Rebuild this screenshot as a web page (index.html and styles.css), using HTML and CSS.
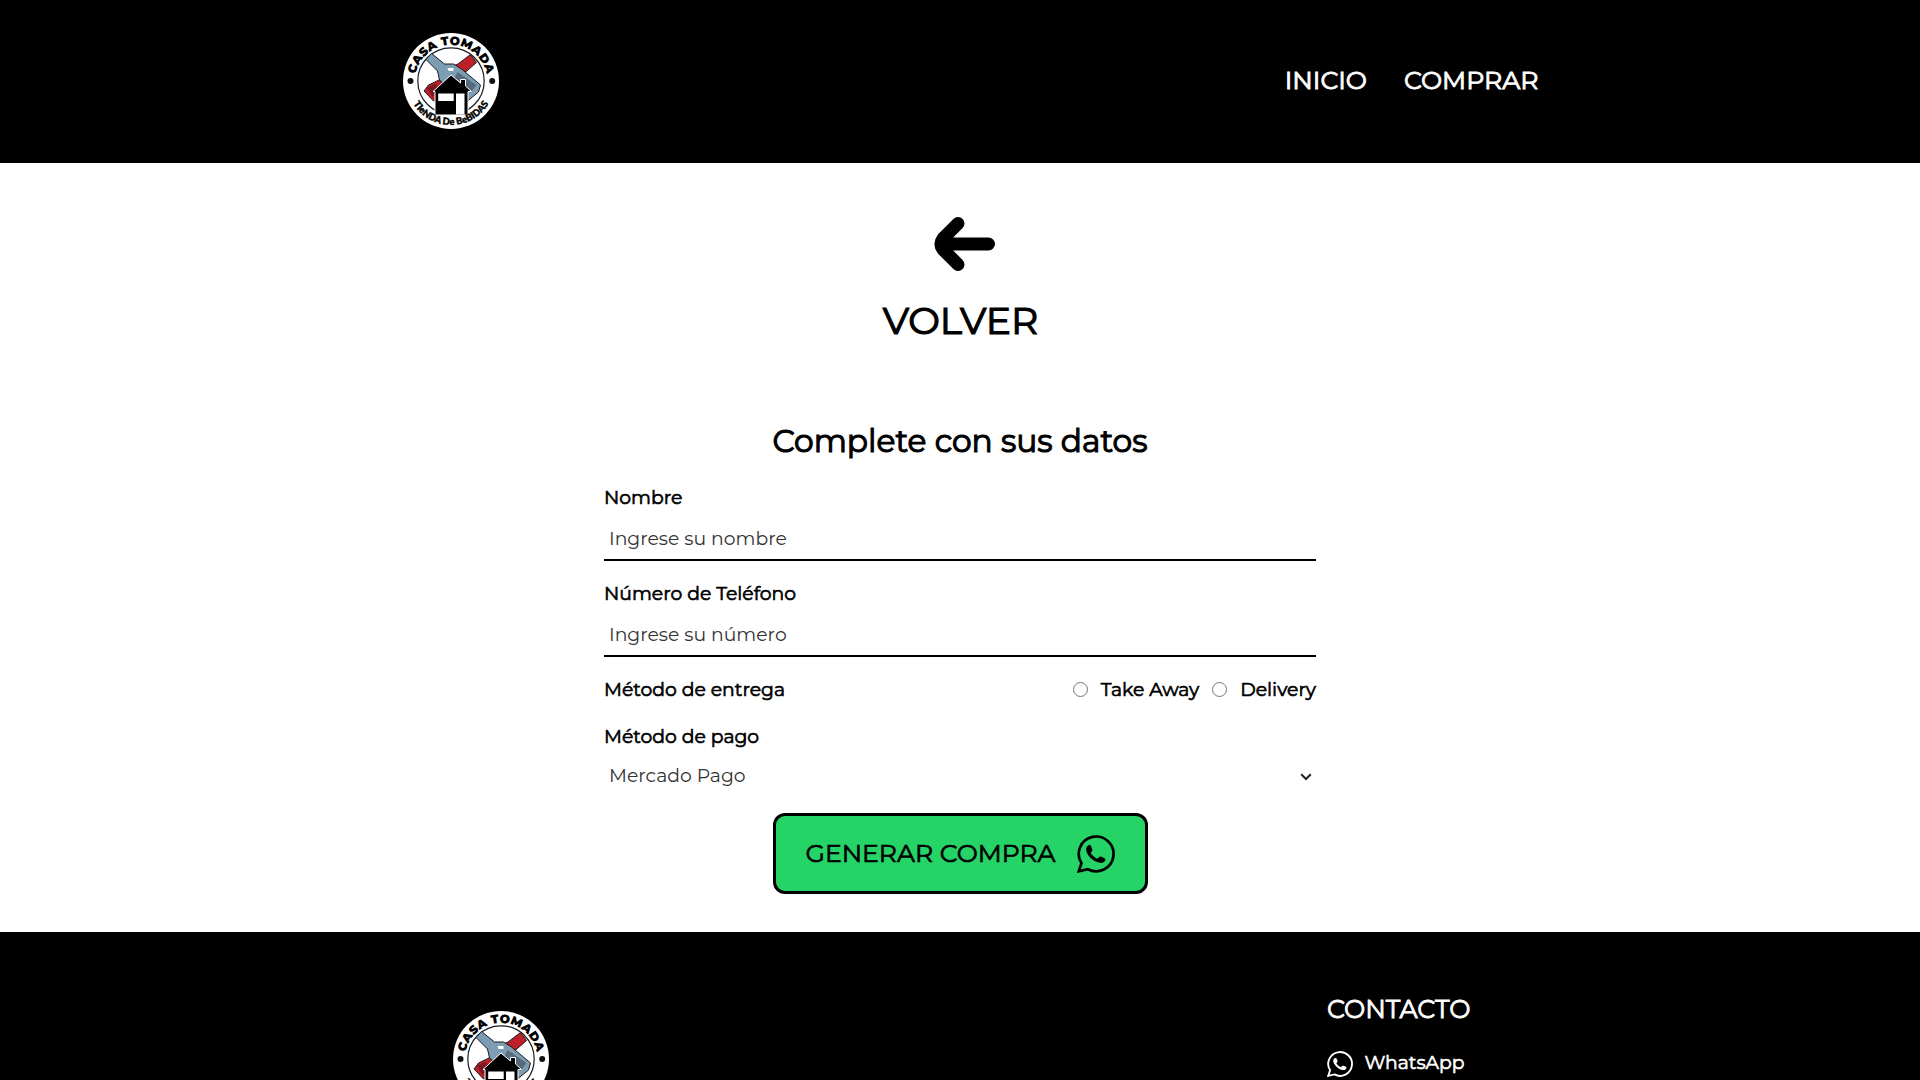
FILE: index.html
```
<!DOCTYPE html>
<html lang="es">
<head>
<meta charset="utf-8">
<title>Casa Tomada - Tienda de bebidas</title>
<link rel="stylesheet" href="styles.css">
</head>
<body>
<svg class="defs" aria-hidden="true">
  <defs>
    <symbol id="logo" viewBox="12.5 13 96 96">
      <path id="arc-top" d="M24.5 61A36 36 0 0 1 96.500 61" fill="none"/>
      <path id="arc-bottom" d="M16.500 61A44 44 0 0 0 104.500 61" fill="none"/>
      <circle cx="60.500" cy="61" r="48" fill="#fff"/>
      <circle cx="60.500" cy="61" r="33.200" fill="#fff" stroke="#171a20" stroke-width="1.200"/>
      <circle cx="20" cy="61" r="3" fill="#111"/>
      <circle cx="101.700" cy="61" r="3" fill="#111"/>
      <g stroke="#1b1b22" stroke-width="1" stroke-linejoin="round">
        <path d="M80 34.500L67.500 44 63 46 57 56 38 65 33.500 71 43 81 48 80 62 67 71 59 74 53 86 42.500Z" fill="#bd2029"/>
        <path d="M36.500 68L44 64 50 68 42 77Z" fill="#7d1820" stroke="none"/>
        <path d="M41 33.500L35.500 39.500 47 51 49 60 71 79 77 81 88 72 90 65 71 49 63 44 54 44Z" fill="#7d9db2"/>
        <path d="M67 52L86 65 80 73 64 58Z" fill="#566c7e" stroke="none"/>
      </g>
      <path d="M57 48h6v3h-5z" fill="#fff"/>
      <path d="M60.500 55L42.500 71.500h2V95h33V71.500H81L75 66v-6.500h-5V63Z" fill="#000" stroke="#fff" stroke-width="1"/>
      <path d="M47.700 73.500h15.500v7.500H47.700zM65.500 73.500h8.500V94.500h-8.500z" fill="#fff"/>
      <text class="logo-top"><textPath href="#arc-top" startOffset="50%" text-anchor="middle">CASA TOMADA</textPath></text>
      <text class="logo-bottom"><textPath href="#arc-bottom" startOffset="50%" text-anchor="middle">TIeNDA De BeBIDAS</textPath></text>
    </symbol>
    <symbol id="whatsapp" viewBox="0 0 38 38">
      <path d="M1.800 36.300L4.500 28.300A17.400 17.400 0 1 1 10.800 34.200Z" fill="none" stroke="currentColor" stroke-width="2.700"/>
      <path d="M11 10.500c1.600-.8 2.700-.3 3.200 1l1.100 2.900c.3.800.1 1.500-.4 2l-1.300 1.400c1.600 2.700 3.900 4.700 6.900 6l1.700-1.800c.6-.6 1.200-.7 1.900-.4l3.400 1.600c.9.500 1.100 1.100.8 2-1 2.400-3.700 3.300-6.600 2.400-5.700-1.700-10-5.400-12-10.300-1-2.700-.7-5.600 1.300-6.800z" fill="currentColor"/>
    </symbol>
  </defs>
</svg>

<header class="header">
  <svg class="logo"><use href="#logo"/></svg>
  <nav class="nav">
    <a class="nav-link">INICIO</a>
    <a class="nav-link">COMPRAR</a>
  </nav>
</header>

<main class="main">
  <a class="back">
    <svg class="back-icon" viewBox="0 0 61 54">
      <path d="M24 6.500L9 21.500Q5 27 9 32.500L24 47.500M10 27H54.500" fill="none" stroke="#000" stroke-width="13" stroke-linecap="round"/>
    </svg>
    <span class="back-text">VOLVER</span>
  </a>

  <form class="form">
    <h1 class="title">Complete con sus datos</h1>
    <label class="label label-name" for="nombre">Nombre</label>
    <input class="input" id="nombre" type="text" placeholder="Ingrese su nombre">
    <label class="label label-phone" for="telefono">Número de Teléfono</label>
    <input class="input" id="telefono" type="text" placeholder="Ingrese su número">
    <div class="delivery">
      <span class="label">Método de entrega</span>
      <div class="options">
        <input class="radio" type="radio" name="entrega" id="take">
        <label class="option option-take" for="take">Take Away</label>
        <input class="radio" type="radio" name="entrega" id="delivery">
        <label class="option" for="delivery">Delivery</label>
      </div>
    </div>
    <span class="label">Método de pago</span>
    <div class="select">
      <span>Mercado Pago</span>
      <svg class="chevron" viewBox="0 0 12 8"><path d="M1.200 1.200L6 6 10.800 1.200" fill="none" stroke="#222" stroke-width="2"/></svg>
    </div>
    <button class="submit" type="button">
      <span>GENERAR COMPRA</span>
      <svg class="submit-icon"><use href="#whatsapp"/></svg>
    </button>
  </form>
</main>

<footer class="footer">
  <svg class="logo"><use href="#logo"/></svg>
  <section class="contact">
    <h2 class="contact-title">CONTACTO</h2>
    <a class="contact-link">
      <svg class="contact-icon"><use href="#whatsapp"/></svg>
      <span>WhatsApp</span>
    </a>
  </section>
</footer>
</body>
</html>
```
FILE: styles.css
```
* { box-sizing: border-box; }
body {
  margin: 0;
  height: 100vh;
  overflow: hidden;
  display: flex;
  flex-direction: column;
  background: #fff;
  color: #000;
  font-family: Montserrat, Inter, sans-serif;
  font-size: 18.8px;
  font-weight: 400;
}
.defs { display: none; }
.logo { display: block; width: 96px; height: 96px; flex: none; }
.logo-top { font: 900 12.2px Montserrat, Lato, sans-serif; }
.logo-bottom { font: 900 9.5px Lato, sans-serif; stroke: #000; stroke-width: .4px; }

.header {
  flex: none;
  height: 163px;
  padding: 0 381.5px 1px 402.5px;
  display: flex;
  align-items: center;
  justify-content: space-between;
  background: #000;
  color: #fff;
}
.nav { display: flex; gap: 37px; padding-bottom: 2px; }
.nav-link { font-size: 25.2px; line-height: 30px; -webkit-text-stroke: .9px; }

.main {
  flex: none;
  height: 769px;
  padding-top: 54px;
  display: flex;
  flex-direction: column;
  align-items: center;
}
.back { display: flex; flex-direction: column; align-items: center; }
.back-icon { width: 61px; height: 54px; margin-left: 9px; }
.back-text {
  margin-top: 25px;
  padding-left: 1px;
  font-size: 37.7px;
  line-height: 50px;
  -webkit-text-stroke: 1.2px;
}

.form { width: 712px; display: flex; flex-direction: column; }
.title {
  margin: 75px 0 0;
  text-align: center;
  font-size: 31.3px;
  font-weight: 400;
  line-height: 40px;
  -webkit-text-stroke: 1.1px;
}
.label { padding-top: 2px; line-height: 22px; -webkit-text-stroke: .65px; }
.label-name { margin-top: 24px; }
.label-phone { margin-top: 20px; }
.input {
  width: 100%;
  height: 40px;
  margin-top: 12px;
  padding: 0 5px 3px;
  border: 0;
  border-bottom: 2px solid #000;
  outline: 0;
  background: none;
  font: inherit;
}
.input::placeholder { color: #333; }
.delivery {
  margin: 20px 0 23px;
  height: 24px;
  display: flex;
  align-items: center;
  justify-content: space-between;
}
.options { display: flex; align-items: center; }
.radio {
  appearance: none;
  width: 15px;
  height: 15px;
  margin: 0 13px 0 0;
  border: 1px solid #767676;
  border-radius: 50%;
}
.option { padding-top: 2px; line-height: 22px; -webkit-text-stroke: .65px; }
.option-take { margin-right: 13px; }
.select {
  height: 28px;
  margin-top: 13px;
  padding: 0 4px 0 5px;
  display: flex;
  align-items: center;
  justify-content: space-between;
  color: #333;
}
.chevron { width: 12px; height: 8px; margin-top: 3px; }
.submit {
  align-self: center;
  width: 375px;
  height: 81px;
  margin-top: 24px;
  padding: 0 30px 0 30px;
  display: flex;
  align-items: center;
  justify-content: space-between;
  border: 3px solid #000;
  border-radius: 12px;
  background: #25d366;
  color: #000;
  font: 400 25.1px Montserrat, Inter, sans-serif;
}
.submit span { padding-bottom: 2px; -webkit-text-stroke: .7px; }
.submit-icon { width: 38px; height: 38px; }

.footer {
  flex: 1;
  min-height: 0;
  overflow: hidden;
  padding: 61px 450px 0 452.5px;
  display: flex;
  justify-content: space-between;
  background: #000;
  color: #fff;
}
.footer .logo { margin-top: 18px; }
.contact { width: 143px; }
.contact-title { margin: 0; font-size: 25.3px; font-weight: 400; line-height: 32px; -webkit-text-stroke: .8px; }
.contact-link { display: flex; align-items: center; gap: 11.5px; margin-top: 25px; line-height: 26px; -webkit-text-stroke: .6px; }
.contact-link span { padding-bottom: 1px; }
.contact-icon { width: 26px; height: 26px; flex: none; }
```
